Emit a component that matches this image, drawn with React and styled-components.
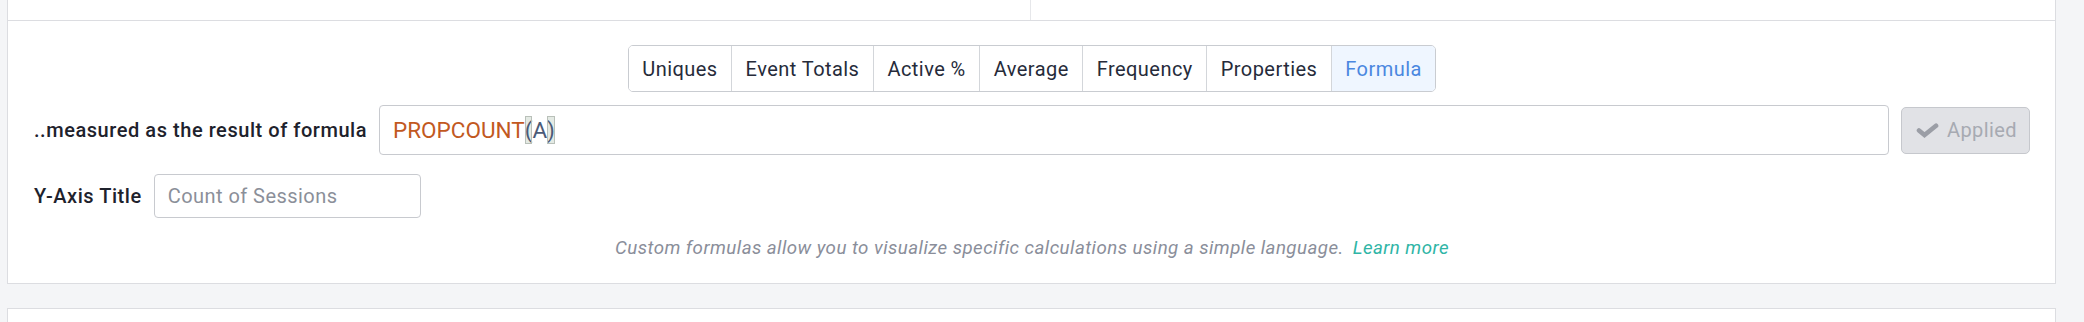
import React from "react";
import styled, { createGlobalStyle } from "styled-components";

const Global = createGlobalStyle`
  html, body { margin: 0; padding: 0; }
  body {
    background: #f4f5f7;
    font-family: Roboto, "Noto Sans", "Liberation Sans", sans-serif;
    color: #262a36;
  }
  * { box-sizing: border-box; }
`;

const Canvas = styled.div`
  padding: 0 28px 0 7px;
  width: 2084px;
  height: 322px;
  overflow: hidden;
`;

const PrevCard = styled.div`
  display: grid;
  grid-template-columns: 1023px 1fr;
  height: 21px;
  background: #fff;
  border-left: 1px solid #dcdde1;
  border-right: 1px solid #dcdde1;
  border-bottom: 1px solid #dcdde1;
`;

const PrevCol = styled.div`
  border-right: ${(p) => (p.$divider ? "1px solid #e6e7ea" : "none")};
`;

const Panel = styled.section`
  background: #fff;
  border-left: 1px solid #dcdde1;
  border-right: 1px solid #dcdde1;
  border-bottom: 1px solid #dcdde1;
  padding: 24px 25px 23px 26px;
  display: flex;
  flex-direction: column;
`;

const TabBar = styled.div`
  align-self: center;
  display: flex;
  border: 1px solid #c9ccd1;
  border-radius: 5px;
  overflow: hidden;
  height: 47px;
`;

const Tab = styled.button`
  font-family: inherit;
  font-size: 20px;
  letter-spacing: 0.45px;
  padding: 0 13.5px;
  height: 100%;
  border: none;
  border-left: ${(p) => (p.$first ? "none" : "1px solid #d3d6da")};
  background: ${(p) => (p.$active ? "#eff6ff" : "#fff")};
  color: ${(p) => (p.$active ? "#4a87e0" : "#262b3a")};
  cursor: pointer;
`;

const Row = styled.div`
  display: flex;
  align-items: center;
  gap: 12px;
  margin-top: ${(p) => p.$mt}px;
`;

const Label = styled.label`
  font-size: 20px;
  font-weight: 500;
  letter-spacing: 0.55px;
  color: #1e222c;
  white-space: nowrap;
`;

const FormulaBox = styled.div`
  flex: 1;
  height: 50px;
  border: 1px solid #c8cacf;
  border-radius: 4px;
  display: flex;
  align-items: center;
  padding-left: 13px;
  font-size: 22.5px;
  font-family: Roboto, "Liberation Sans", sans-serif;
`;

const Fn = styled.span`
  color: #c2591f;
`;

const Arg = styled.span`
  color: #4b5b78;
`;

const Bracket = styled.span`
  color: #4b5b78;
  background: #e4eae4;
  outline: 1px solid #b9c0b9;
  outline-offset: -1px;
  padding: 1px 0;
`;

const AppliedButton = styled.button`
  width: 129px;
  height: 47px;
  border: 1px solid #c6c8cd;
  border-radius: 5px;
  background: #e1e2e6;
  color: #a7aab2;
  font-family: inherit;
  font-size: 20px;
  letter-spacing: 0.4px;
  display: flex;
  align-items: center;
  justify-content: center;
  gap: 8px;
  padding: 0 0 0 2px;
`;

const TextInput = styled.input`
  width: 267px;
  height: 44px;
  border: 1px solid #c8cacf;
  border-radius: 4px;
  padding: 0 13px;
  font-family: inherit;
  font-size: 20px;
  letter-spacing: 0.45px;
  color: #262a36;
  outline: none;
  &::placeholder { color: #8b8f99; }
`;

const Help = styled.p`
  margin: 18px 0 0;
  text-align: center;
  font-style: italic;
  font-size: 18.7px;
  letter-spacing: 0.45px;
  line-height: 24px;
  color: #8a8e9a;
`;

const HelpLink = styled.a`
  color: #2fb5a6;
  text-decoration: none;
  margin-left: 9px;
`;

const NextCard = styled.div`
  margin-top: 24px;
  height: 40px;
  background: #fff;
  border: 1px solid #dcdde1;
`;

const CheckIcon = () => (
  <svg width="23" height="15" viewBox="0 0 23 15" aria-hidden="true">
    <path
      d="M3 7.5 L8.5 12 L20 2.8"
      fill="none"
      stroke="#9b9ea6"
      strokeWidth="4.6"
      strokeLinejoin="miter"
      strokeLinecap="round"
    />
  </svg>
);

const tabs = ["Uniques", "Event Totals", "Active %", "Average", "Frequency", "Properties", "Formula"];

export default function App() {
  return (
    <>
      <Global />
      <Canvas>
        <PrevCard>
          <PrevCol $divider />
          <PrevCol />
        </PrevCard>
        <Panel>
          <TabBar>
            {tabs.map((t, i) => (
              <Tab key={t} $first={i === 0} $active={t === "Formula"}>
                {t}
              </Tab>
            ))}
          </TabBar>
          <Row $mt={13}>
            <Label>..measured as the result of formula</Label>
            <FormulaBox>
              <Fn>PROPCOUNT</Fn>
              <Bracket>(</Bracket>
              <Arg>A</Arg>
              <Bracket>)</Bracket>
            </FormulaBox>
            <AppliedButton disabled>
              <CheckIcon />
              Applied
            </AppliedButton>
          </Row>
          <Row $mt={19}>
            <Label>Y-Axis Title</Label>
            <TextInput placeholder="Count of Sessions" />
          </Row>
          <Help>
            Custom formulas allow you to visualize specific calculations using a simple language.
            <HelpLink href="#">Learn more</HelpLink>
          </Help>
        </Panel>
        <NextCard />
      </Canvas>
    </>
  );
}
